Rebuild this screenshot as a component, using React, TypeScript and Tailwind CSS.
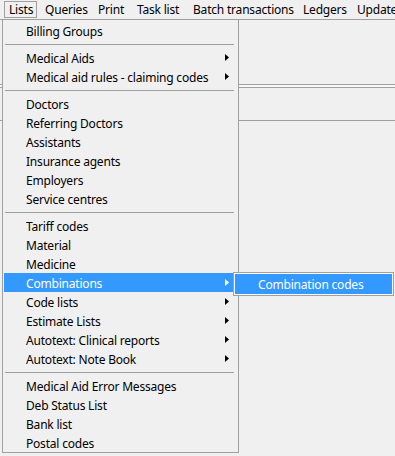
import React from "react";

type Item = { label: string; sub?: boolean; active?: boolean } | "sep";

const items: Item[] = [
  { label: "Billing Groups" },
  "sep",
  { label: "Medical Aids", sub: true },
  { label: "Medical aid rules - claiming codes", sub: true },
  "sep",
  { label: "Doctors" },
  { label: "Referring Doctors" },
  { label: "Assistants" },
  { label: "Insurance agents" },
  { label: "Employers" },
  { label: "Service centres" },
  "sep",
  { label: "Tariff codes" },
  { label: "Material" },
  { label: "Medicine" },
  { label: "Combinations", sub: true, active: true },
  { label: "Code lists", sub: true },
  { label: "Estimate Lists", sub: true },
  { label: "Autotext: Clinical reports", sub: true },
  { label: "Autotext: Note Book", sub: true },
  "sep",
  { label: "Medical Aid Error Messages" },
  { label: "Deb Status List" },
  { label: "Bank list" },
  { label: "Postal codes" },
];

const Arrow = ({ color }: { color: string }) => (
  <svg width="4" height="7" viewBox="0 0 4 7" className="block">
    <path d="M0 0 L4 3.5 L0 7 Z" fill={color} />
  </svg>
);

export default function App() {
  return (
    <div
      className="relative w-[395px] h-[456px] overflow-hidden bg-[#f0f0f0] text-[12px] tracking-[-0.2px] text-black"
      style={{ fontFamily: '"Noto Sans", "Open Sans", sans-serif' }}
    >
      {/* menu bar */}
      <div className="flex h-[19px] items-center pl-[4px] leading-none whitespace-nowrap">
        <div className="flex h-[17px] w-[33px] shrink-0 items-center border border-[#a0a0a0] bg-[#f0f0f0] pl-[4px]">
          Lists
        </div>
        <div className="w-[54px] shrink-0 pl-[8px]">Queries</div>
        <div className="w-[39px] shrink-0 pl-[7px]">Print</div>
        <div className="w-[56px] shrink-0 pl-[7px]">Task list</div>
        <div className="w-[110px] shrink-0 pl-[7px]">Batch transactions</div>
        <div className="w-[55px] shrink-0 pl-[7px]">Ledgers</div>
        <div className="shrink-0 pl-[6px]">Update</div>
      </div>

      {/* background window */}
      <div className="h-px bg-[#a0a0a0]" />
      <div className="h-[64px]" />
      <div className="h-px bg-[#a0a0a0]" />
      <div className="h-[2px] bg-[#f8f8f8]" />
      <div className="h-px bg-[#a0a0a0]" />
      <div className="h-[32px]" />
      <div className="h-px bg-[#a0a0a0]" />

      {/* dropdown */}
      <div className="absolute left-[2px] top-[19px] w-[237px] border border-[#a0a0a0] bg-[#f0f0f0] pl-px pr-[4px] pt-px">
        {items.map((it, i) =>
          it === "sep" ? (
            <div key={i} className="flex h-[8px] items-center pl-px">
              <div className="h-px w-[231px] bg-[#a0a0a0]" />
            </div>
          ) : (
            <div
              key={i}
              className={
                "flex h-[19px] items-center pl-[22px] pr-[5px] leading-none " +
                (it.active ? "bg-[#3399ff] text-white" : "")
              }
            >
              <span className="flex-1 pt-[3px] whitespace-nowrap">{it.label}</span>
              {it.sub && <Arrow color={it.active ? "#ffffff" : "#000000"} />}
            </div>
          )
        )}
      </div>

      {/* submenu */}
      <div className="absolute left-[233px] top-[272px] w-[161px] border border-[#a0a0a0] bg-[#f8f8f8] p-px">
        <div className="flex h-[20px] items-center bg-[#3399ff] pl-[23px] leading-none text-white">
          <span className="pt-[2px]">Combination codes</span>
        </div>
      </div>
    </div>
  );
}
